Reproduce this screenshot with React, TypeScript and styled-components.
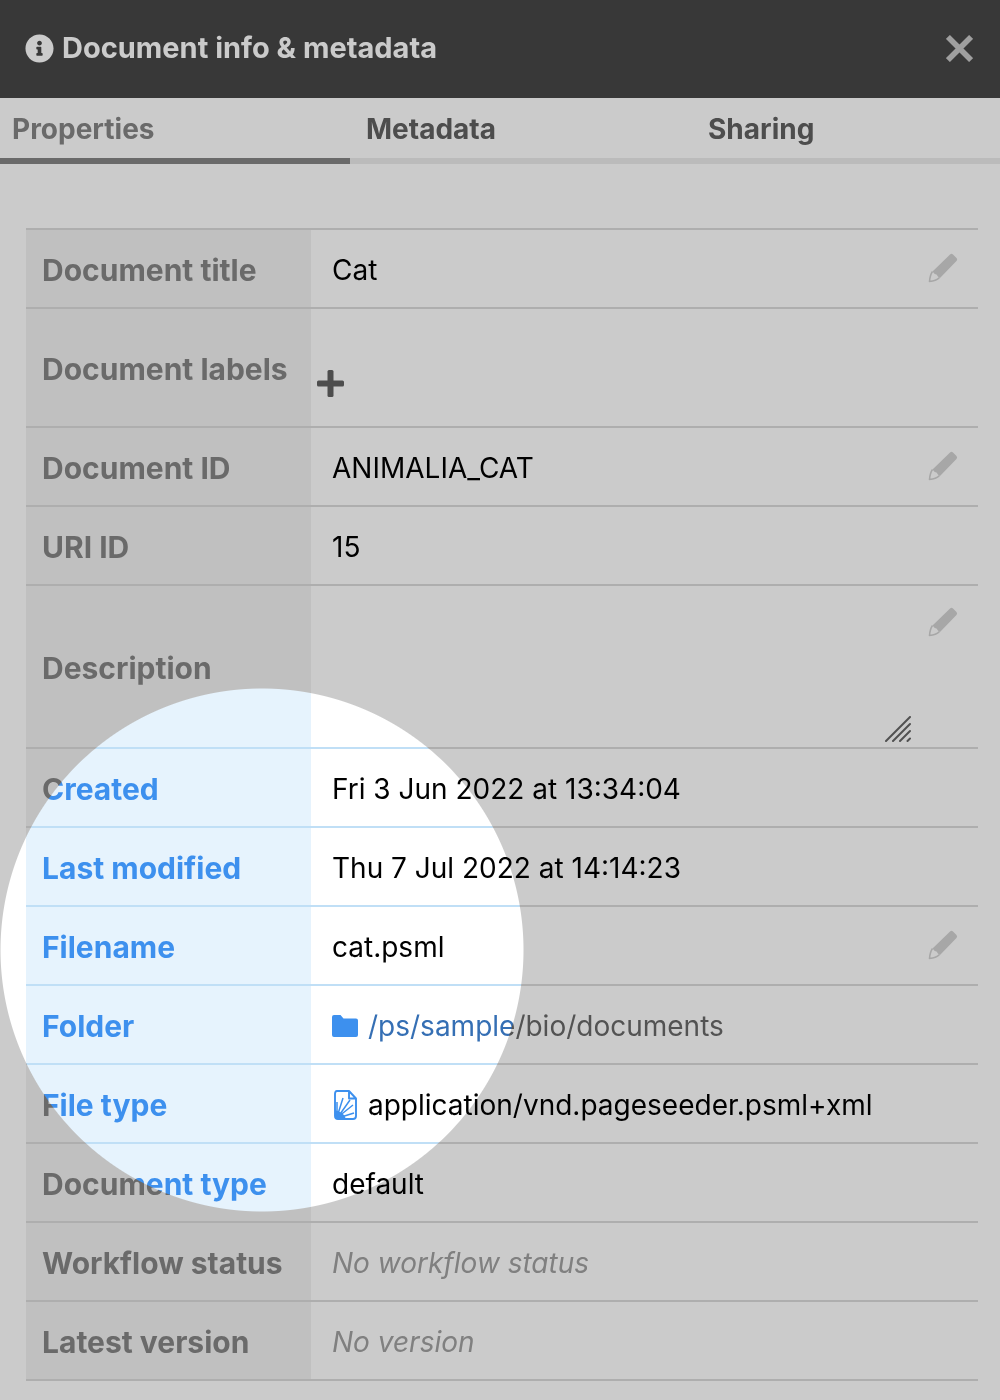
import React from "react";
import styled, { createGlobalStyle } from "styled-components";

const GlobalStyle = createGlobalStyle`
  *, *::before, *::after { box-sizing: border-box; }
  body {
    margin: 0;
    background: #fff;
    font-family: Inter, "Liberation Sans", sans-serif;
    font-size: 28px;
    line-height: 36px;
    color: #000;
  }
  button, textarea { font: inherit; color: inherit; }
`;

const blue = "#3d90ee";
const darkBlue = "#3068ab";
const line = "#c0dff6";
const labelFill = "#e6f3fd";

const Dialog = styled.main`
  position: relative;
  min-height: 100vh;
  background: #fff;
`;

const Header = styled.header`
  display: flex;
  align-items: center;
  justify-content: space-between;
  height: 98px;
  padding: 0 27px 2px 25px;
  background: #464646;
  color: #fff;
`;

const Title = styled.h1`
  display: flex;
  align-items: center;
  gap: 8px;
  margin: 0;
  font-size: 29px;
  font-weight: 700;
`;

const IconButton = styled.button<{ $color: string }>`
  display: flex;
  padding: 0;
  border: 0;
  background: none;
  color: ${(p) => p.$color};
  cursor: pointer;
`;

const RowIconButton = styled(IconButton)`
  padding-bottom: 4px;
`;

const TabList = styled.div`
  display: grid;
  grid-template-columns: 350fr 338fr 304fr;
  column-gap: 4px;
  box-shadow: inset 0 -6px 0 #ebebeb;
`;

const Tab = styled.button<{ $active?: boolean }>`
  height: 66px;
  padding: 2px 12px 0;
  border: 0;
  border-bottom: 6px solid ${(p) => (p.$active ? blue : "transparent")};
  background: none;
  color: ${(p) => (p.$active ? blue : darkBlue)};
  font-weight: 700;
  text-align: left;
  cursor: pointer;
`;

const Panel = styled.section`
  padding: 64px 22px 19px 26px;
`;

const Table = styled.table`
  width: 100%;
  border-spacing: 0;
  border-top: 2px solid ${line};
  table-layout: fixed;
`;

const Label = styled.th`
  width: 285px;
  padding: 2px 16px 0;
  border-bottom: 2px solid ${line};
  background: ${labelFill};
  color: ${blue};
  font-size: 30px;
  font-weight: 700;
  text-align: left;
  white-space: nowrap;
`;

const Cell = styled.td<{ $height: number }>`
  height: ${(p) => p.$height}px;
  padding: 0;
  border-bottom: 2px solid ${line};
`;

const Value = styled.div<{ $muted?: boolean }>`
  display: flex;
  align-items: center;
  gap: 10px;
  padding: 2px 20px 0 21px;
  color: ${(p) => (p.$muted ? "#a0a0a0" : "inherit")};
  font-style: ${(p) => (p.$muted ? "italic" : "normal")};
`;

const Grow = styled.span`
  flex: 1;
`;

const LabelsValue = styled.div`
  padding: 31px 6px 0;
`;

const DescriptionValue = styled.div`
  display: flex;
  align-items: flex-start;
  height: 161px;
  padding: 21px 20px 0;
`;

const DescriptionBox = styled.div`
  position: relative;
  flex: 1;
  height: 135px;
  margin-right: 17px;
`;

const TextArea = styled.textarea`
  display: block;
  width: 100%;
  height: 100%;
  padding: 0;
  border: 0;
  background: none;
  resize: none;
`;

const Grip = styled.svg`
  position: absolute;
  right: 0;
  bottom: 0;
`;

const FolderLink = styled.a`
  color: #356fb4;
  text-decoration: none;
`;

const Spotlight = styled.div`
  position: absolute;
  inset: 0;
  pointer-events: none;
  backdrop-filter: grayscale(1) brightness(0.797);
  mask-image: radial-gradient(circle at 262px 950px, transparent 261px, #000 262px);
`;

const InfoIcon = () => (
  <svg width="29" height="29" viewBox="0 0 512 512" fill="currentColor" aria-hidden="true">
    <path d="M256 8C119 8 8 119 8 256s111 248 248 248 248-111 248-248S393 8 256 8zm0 110c23.200 0 42 18.800 42 42s-18.800 42-42 42-42-18.800-42-42 18.800-42 42-42zm56 254c0 6.600-5.400 12-12 12h-88c-6.600 0-12-5.400-12-12v-24c0-6.600 5.400-12 12-12h12v-64h-12c-6.600 0-12-5.400-12-12v-24c0-6.600 5.400-12 12-12h64c6.600 0 12 5.400 12 12v100h12c6.600 0 12 5.400 12 12z" />
  </svg>
);

const CloseIcon = () => (
  <svg width="27" height="27" viewBox="0 0 28 28" stroke="currentColor" strokeWidth="5.800" aria-hidden="true">
    <path d="M2 2 26 26M26 2 2 26" />
  </svg>
);

const PencilIcon = () => (
  <svg width="30" height="30" viewBox="0 0 30 30" fill="currentColor" aria-hidden="true">
    <path d="M22 1.500Q23.500 .2 25 1.500L28.500 5Q29.800 6.500 28.500 8L12 25Q9.500 23.500 8.500 21.500 6 21 4.500 18.500Z" />
    <path d="M4.500 18.500 Q2 22 1.500 28.500 Q8 28 11.500 24.500" fill="none" stroke="currentColor" strokeWidth="1.600" strokeLinejoin="round" />
  </svg>
);

const PlusIcon = () => (
  <svg width="27" height="27" viewBox="0 0 27 27" fill="currentColor" aria-hidden="true">
    <rect x="10.500" y="0" width="6" height="27" rx="1.500" />
    <rect x="0" y="10.500" width="27" height="6" rx="1.500" />
  </svg>
);

const FolderIcon = () => (
  <svg width="26" height="22" viewBox="0 0 26 22" fill={blue} aria-hidden="true">
    <path d="M2 0H8.500L11.500 3.500H24Q26 3.500 26 5.500V20Q26 22 24 22H2Q0 22 0 20V2Q0 0 2 0Z" />
  </svg>
);

const PsmlIcon = () => (
  <svg width="26" height="30" viewBox="0 0 26 30" fill="none" stroke={blue} strokeWidth="1.900" aria-hidden="true">
    <path d="M5 1H17L24 8.500V26Q24 29 21 29H6Q3 29 3 26V4Q3 1 5 1ZM17 1V8.500H24" strokeLinejoin="round" />
    <path d="M5 26 5 12M5 27 11 8M6 27 18 10M6 27 21 15M6 28 22 23" strokeWidth="1.500" />
    <path d="M3 20 8 22 12 25 14 29H6Q3 29 3 26Z" fill={blue} stroke="none" />
  </svg>
);

const EditButton = ({ name }: { name: string }) => (
  <RowIconButton $color="#d2d2d2" aria-label={`Edit ${name}`}>
    <PencilIcon />
  </RowIconButton>
);

type RowProps = {
  label: string;
  height?: number;
  children: React.ReactNode;
};

const Row = ({ label, height = 79, children }: RowProps) => (
  <tr>
    <Label scope="row">{label}</Label>
    <Cell $height={height}>{children}</Cell>
  </tr>
);

export default function App() {
  return (
    <>
      <GlobalStyle />
      <Dialog>
        <Header>
          <Title>
            <InfoIcon />
            Document info &amp; metadata
          </Title>
          <IconButton $color="#c8c8c8" aria-label="Close">
            <CloseIcon />
          </IconButton>
        </Header>
        <TabList role="tablist">
          <Tab role="tab" aria-selected="true" $active>Properties</Tab>
          <Tab role="tab" aria-selected="false">Metadata</Tab>
          <Tab role="tab" aria-selected="false">Sharing</Tab>
        </TabList>
        <Panel>
          <Table>
            <tbody>
              <Row label="Document title">
                <Value><Grow>Cat</Grow><EditButton name="document title" /></Value>
              </Row>
              <Row label="Document labels" height={119}>
                <LabelsValue>
                  <IconButton $color={darkBlue} aria-label="Add label"><PlusIcon /></IconButton>
                </LabelsValue>
              </Row>
              <Row label="Document ID">
                <Value><Grow>ANIMALIA_CAT</Grow><EditButton name="document ID" /></Value>
              </Row>
              <Row label="URI ID"><Value>15</Value></Row>
              <Row label="Description" height={163}>
                <DescriptionValue>
                  <DescriptionBox>
                    <TextArea aria-label="Description" />
                    <Grip width="26" height="26" viewBox="0 0 26 26" stroke="#666" strokeWidth="2" strokeLinecap="round" aria-hidden="true">
                      <path d="M1 25 25 1M8 25 25 8M15 25 25 15M22.500 25 25 22.500" />
                    </Grip>
                  </DescriptionBox>
                  <EditButton name="description" />
                </DescriptionValue>
              </Row>
              <Row label="Created"><Value>Fri 3 Jun 2022 at 13:34:04</Value></Row>
              <Row label="Last modified"><Value>Thu 7 Jul 2022 at 14:14:23</Value></Row>
              <Row label="Filename">
                <Value><Grow>cat.psml</Grow><EditButton name="filename" /></Value>
              </Row>
              <Row label="Folder">
                <Value><FolderIcon /><FolderLink href="#folder">/ps/sample/bio/documents</FolderLink></Value>
              </Row>
              <Row label="File type">
                <Value><PsmlIcon />application/vnd.pageseeder.psml+xml</Value>
              </Row>
              <Row label="Document type"><Value>default</Value></Row>
              <Row label="Workflow status"><Value $muted>No workflow status</Value></Row>
              <Row label="Latest version"><Value $muted>No version</Value></Row>
            </tbody>
          </Table>
        </Panel>
        <Spotlight />
      </Dialog>
    </>
  );
}
